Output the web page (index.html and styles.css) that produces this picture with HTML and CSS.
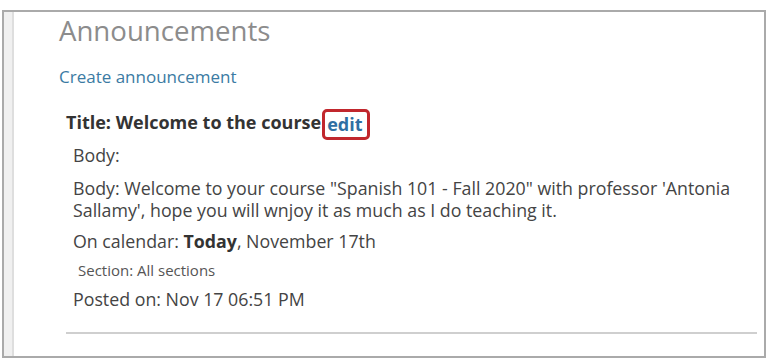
FILE: index.html
```html
<!DOCTYPE html>
<html lang="en">
<head>
  <meta charset="UTF-8">
  <meta name="viewport" content="width=device-width, initial-scale=1.0">
  <title>Announcements</title>
  <link rel="stylesheet" href="styles.css">
</head>
<body>
  <div class="frame">
    <div class="stripe"></div>
    <div class="content">
      <h1 class="heading">Announcements</h1>
      <a class="create" href="#">Create announcement</a>

      <div class="announcement">
        <div class="title">Title: Welcome to the course<a class="edit" href="#">edit</a></div>
        <p class="line">Body:</p>
        <p class="line body">Body: Welcome to your course "Spanish 101 - Fall 2020" with professor 'Antonia Sallamy', hope you will wnjoy it as much as I do teaching it.</p>
        <p class="line">On calendar: <b>Today</b>, November 17th</p>
        <p class="line small">Section: All sections</p>
        <p class="line">Posted on: Nov 17 06:51 PM</p>
        <hr class="rule">
      </div>
    </div>
  </div>
</body>
</html>
```

FILE: styles.css
```css
body {
  margin: 0;
  background: #fff;
  font-family: 'Open Sans', 'Liberation Sans', sans-serif;
  color: #444;
}
.frame {
  display: flex;
  box-sizing: border-box;
  width: 764px;
  height: 348px;
  margin: 10px 0 0 2px;
  border: 2px solid #aaa;
  background: #fff;
}
.stripe {
  width: 8px;
  background: #f0f0f0;
  border-right: 2px solid #dedede;
}
.content {
  flex: 1;
  padding-left: 45px;
}
.heading {
  margin: 0;
  font-size: 27.6px;
  font-weight: 400;
  line-height: 36px;
  color: #8c8c8c;
}
.create {
  display: block;
  margin-top: 18px;
  font-size: 17px;
  line-height: 22px;
  color: #3b7ba3;
  text-decoration: none;
}
.announcement {
  margin-top: 23px;
  padding-left: 7px;
}
.title {
  font-size: 18px;
  font-weight: 700;
  line-height: 22px;
  color: #333;
}
.edit {
  display: inline-block;
  vertical-align: middle;
  margin: -5px 0 -5px 1px;
  padding: 3px 4px 3px 2px;
  line-height: 19px;
  border: 3px solid #c1272d;
  border-radius: 5px;
  color: #2f6fa3;
  text-decoration: none;
}
.line {
  margin: 9px 0 0 7px;
  font-size: 17.8px;
  line-height: 22px;
  color: #444;
}
.line b {
  color: #333;
}
.body {
  margin-top: 11px;
  max-width: 670px;
}
.small {
  margin-top: 9px;
  margin-left: 12px;
  font-size: 15px;
  line-height: 18px;
  color: #555;
}
.rule {
  margin: 22px 0 0 0;
  width: 691px;
  height: 0;
  border: none;
  border-top: 2px solid #cfcfcf;
}
```
